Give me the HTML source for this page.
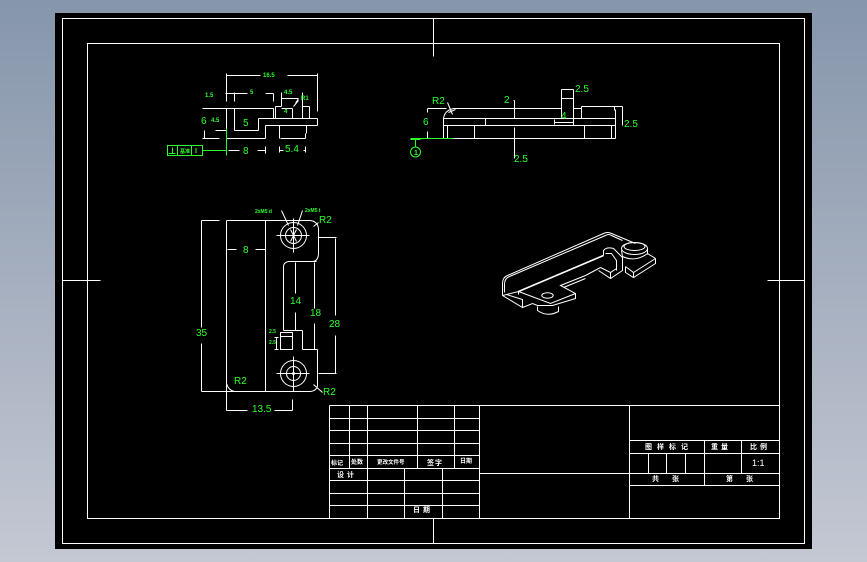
<!DOCTYPE html>
<html><head><meta charset="utf-8"><style>
html,body{margin:0;padding:0;width:867px;height:562px;overflow:hidden}
body{background:linear-gradient(180deg,#8696ab 0%,#c4c8d3 100%)}
svg{position:absolute;left:0;top:0}
text{font-family:"Liberation Sans","Noto Sans CJK SC",sans-serif}
.g{fill:#2dff2d;font-size:10px}
.s{fill:#2dff2d;font-size:6px;font-weight:bold}
.w{fill:#fff;font-size:7px;font-weight:bold}
</style></head><body>
<svg width="867" height="562" viewBox="0 0 867 562">
<rect x="55" y="13" width="757" height="536" fill="#000"/>
<g transform="translate(.5,.5)" fill="none" stroke="#fff" stroke-width="1">
<g shape-rendering="crispEdges">
<rect x="62" y="18" width="742" height="525"/>
<rect x="87" y="43" width="692" height="475"/>
<path d="M433 18V56M433 518V543M62 280H100M767 280H804"/>
<!-- title block left -->
<path d="M329 405H779M329 418H479M329 430H479M329 443H479M329 455H479M329 468H479M329 480H479M329 493H479M329 505H479M329 405V518M349 405V468M367 405V518M417 405V468M454 405V468M479 405V518M404 468V518M442 468V518M479 473H629"/>
<!-- title block right -->
<path d="M629 405V518M629 440H779M629 453H779M629 473H779M629 485H779M704 440V485M741 440V473M648 453V473M666 453V473M685 453V473"/>
<!-- view 1 -->
<path d="M226 73V101M226 75H260M287 75H317M317 73V111M225 93H247M234 92V101M265 93H273M273 93V101"/>
<path d="M202 108H273M226 108V128M234 108V130M273 108V118M234 130H258M258 118V130M258 118H317M265 125H317M317 118V125M265 125V138M226 138H265M202 138H219M204 130V138M215 130H226M279 125V138M306 125V133M305 133V138M280 138H305"/>
<path d="M275 106V118M275 106H281M281 92V106M281 108H292M292 108V118M302 92V118M302 106H309M309 106V118M281 98H298M228 150H239M257 150H265M265 146V153M279 146V152M279 150H283M303 150H305M305 146V152"/>
</g>
<path d="M298 98L295 103M298 100L293 106"/>
<g shape-rendering="crispEdges">
<!-- view 2 -->
<path d="M453 138H615M443 118V138M447 125V138M474 125V138M584 125V138M611 125V138M615 109V138M443 118H615M443 125H615M485 118V125M453 108H561M561 89V118M573 89V125M561 89H573M561 98H573M554 119V124M554 122H573M573 108H581M581 106V118M581 106H622M614 106V110M622 106V125"/>
<path d="M514 100V118M514 127V158M513 100H514M427 108H446M427 108V112M427 131V138"/>
</g>
<path d="M453 108Q444 110 443 118M447 102L452 114M448 112L455 109"/>
<!-- view 3 -->
<g shape-rendering="crispEdges">
<path d="M226 220H310M226 220V391M201 391H310M318 228V254M288 261H316M283 266V330M283 330H302M302 330V349M302 349H317M317 349V384M265 220V391"/>
<path d="M201 220H219M201 220V327M201 343V391M227 249H236M255 249H265M295 262V293M295 312V330M314 262V308M314 323V349M318 237H336M335 238V315M335 335V373M318 373H336"/>
<path d="M280 332H292V349H280ZM280 336H292M276 337V349M274 337H278M274 349H278M226 391V410M226 410H247M274 410H292M292 399V410"/>
<path d="M276 235H309M293 218V252M276 373H309M293 356V391"/>
</g>
<path d="M310 220Q317 221 318 228M318 254Q317 261 312 261M288 261Q283 262 283 266M310 391Q317 390 317 384M226 383Q228 390 234 391M281 210L288 225M302 210L297 225M313 226L318 222M313 384L322 392M290 229L296 241M296 229L290 241"/>
<circle cx="293" cy="235" r="13"/><circle cx="293" cy="235" r="8"/>
<circle cx="293" cy="373" r="13"/><circle cx="293" cy="373" r="7"/><circle cx="293" cy="373" r="1"/>
<!-- iso view -->
<path d="M502 295V283Q502 277 507 275L603 233Q607 231 611 233L635 243"/>
<path d="M504 292V284Q504 278 509 276L605 235Q608 233 611 235L622 240"/>
<path d="M502 295L522 307V299L506 294L502 295M506 294L518 291V294M522 307L532 303L537 305H552L575 298V293L560 285L585 275M563 287L585 278M518 291L550 303L575 293"/>
<path d="M518 291L603 255" stroke-width="1.600"/>
<ellipse cx="547" cy="295" rx="5.700" ry="2.700"/>
<path d="M537 306V310Q547 317 558 311V306"/>
<path d="M603 255V250Q606 246 613 248L622 257V270L610 278L598 270M605 253H611L616 260V270M600 267L610 272L616 268M610 272V278M585 275L600 267"/>
<ellipse cx="634" cy="248" rx="13" ry="6"/>
<ellipse cx="634" cy="246" rx="10.500" ry="4"/>
<path d="M621 250L622 256Q635 262 647 253V248M647 253L655 258V263L633 277L625 272V266M625 266L633 272L655 258M633 272V277"/>
</g>
<!-- green -->
<g fill="none" stroke="#2dff2d" shape-rendering="crispEdges" transform="translate(.5,.5)">
<rect x="167" y="145" width="35" height="10"/>
<path d="M177 145V155M191 145V155M202 150H226M226 128V155M410 138H453M415 138V147M410 139H420"/>
<path d="M172 147V153M168 153H175"/>
</g>
<circle cx="415.500" cy="152" r="5" fill="none" stroke="#2dff2d"/>
<text class="s" x="414" y="155" style="font-size:7px">1</text>
<text class="s" x="180" y="153" style="font-size:5px">基准</text>
<text class="s" x="195" y="153" style="font-size:7px">I</text>
<text class="g" x="243" y="126">5</text>
<text class="g" x="201" y="124">6</text>
<text class="g" x="243" y="154">8</text>
<text class="g" x="285" y="152">5.4</text>
<text class="g" x="432" y="104">R2</text>
<text class="g" x="504" y="103">2</text>
<text class="g" x="423" y="125">6</text>
<text class="g" x="561" y="119">4</text>
<text class="g" x="575" y="92">2.5</text>
<text class="g" x="624" y="127">2.5</text>
<text class="g" x="514" y="162">2.5</text>
<text class="g" x="243" y="253">8</text>
<text class="g" x="196" y="336">35</text>
<text class="g" x="290" y="304">14</text>
<text class="g" x="310" y="316">18</text>
<text class="g" x="329" y="327">28</text>
<text class="g" x="319" y="223">R2</text>
<text class="g" x="234" y="384">R2</text>
<text class="g" x="323" y="395">R2</text>
<text class="g" x="252" y="412">13.5</text>
<text class="s" x="263" y="77">16.5</text>
<text class="s" x="205" y="97">1.5</text>
<text class="s" x="250" y="94">5</text>
<text class="s" x="284" y="94">4.5</text>
<text class="s" x="211" y="122">4.5</text>
<text class="s" x="284" y="113">4</text>
<text class="s" x="301" y="100">R1</text>
<text class="s" x="255" y="213" style="font-size:5px">2xM5 d</text>
<text class="s" x="305" y="212" style="font-size:5px">2xM5 t</text>
<text class="s" x="269" y="333" style="font-size:5px">2.5</text>
<text class="s" x="269" y="344" style="font-size:5px">2.5</text>
<!-- title text -->
<text class="w" x="331" y="465" style="font-size:6px">标记</text>
<text class="w" x="351" y="464" style="font-size:6px">处数</text>
<text class="w" x="377" y="464" style="font-size:5.500px">更改文件号</text>
<text class="w" x="427" y="465">签</text><text class="w" x="435" y="465">字</text>
<text class="w" x="460" y="463" style="font-size:6px">日</text><text class="w" x="466" y="463" style="font-size:6px">期</text>
<text class="w" x="337" y="477">设</text><text class="w" x="347" y="477">计</text>
<text class="w" x="413" y="512">日</text><text class="w" x="423" y="512">期</text>
<text class="w" x="645" y="449" style="letter-spacing:5px">图样标记</text>
<text class="w" x="711" y="449">重</text><text class="w" x="721" y="449">量</text>
<text class="w" x="750" y="449">比</text><text class="w" x="760" y="449">例</text>
<text x="752" y="466" fill="#fff" font-size="9">1:1</text>
<text class="w" x="652" y="481">共</text><text class="w" x="672" y="481">张</text>
<text class="w" x="726" y="481">第</text><text class="w" x="746" y="481">张</text>
</svg>
</body></html>
